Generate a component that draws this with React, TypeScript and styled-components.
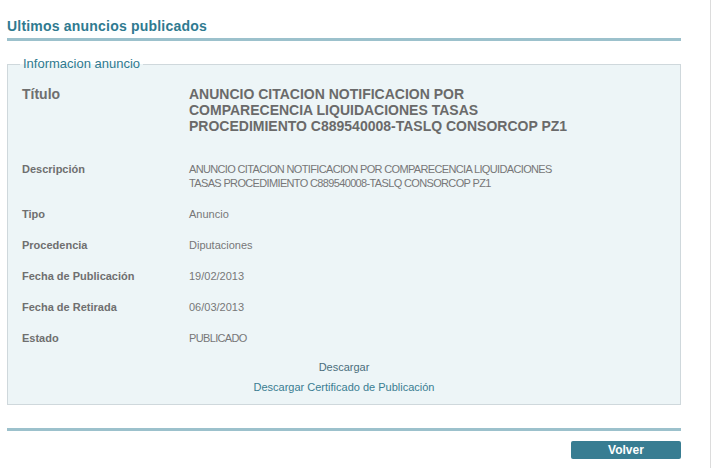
import React from "react";
import styled, { createGlobalStyle } from "styled-components";

const GlobalStyle = createGlobalStyle`
    html, body {
        margin: 0;
        padding: 0;
        background: #ffffff;
        font-family: "Liberation Sans", Arial, sans-serif;
    }
`;

const Page = styled.div`
    width: 711px;
    min-height: 468px;
    box-sizing: border-box;
    border-right: 1px solid #dcdcdc;
    padding: 18px 0 0 7px;
`;

const Content = styled.div`
    width: 674px;
`;

const Heading = styled.h2`
    margin: 0;
    font-size: 14px;
    line-height: 16px;
    font-weight: 700;
    letter-spacing: 0.2px;
    color: #2f7a90;
    padding-bottom: 4px;
    border-bottom: 3px solid #9cc1cc;
`;

const Fieldset = styled.fieldset`
    margin: 16px 0 0 0;
    padding: 15px 14px 10px 14px;
    border: 1px solid #cfd8dc;
    background: #edf5f7;
    min-width: 0;
`;

const Legend = styled.legend`
    margin-left: -2px;
    padding: 0 3px;
    font-size: 13px;
    line-height: 14px;
    color: #2f7a90;
`;

const InfoGrid = styled.div`
    display: grid;
    grid-template-columns: 167px 386px;
    row-gap: 17px;
`;

const Label = styled.div<{ $big?: boolean }>`
    font-size: ${p => (p.$big ? "14px" : "11px")};
    line-height: ${p => (p.$big ? "16px" : "14px")};
    font-weight: 700;
    color: #6f6f6f;
    margin-bottom: ${p => (p.$big ? "11px" : "0")};
`;

const Value = styled.div<{ $big?: boolean; $caps?: boolean }>`
    font-size: ${p => (p.$big ? "14px" : "11px")};
    line-height: ${p => (p.$big ? "16px" : "14px")};
    font-weight: ${p => (p.$big ? 700 : 400)};
    letter-spacing: ${p => (p.$caps && !p.$big ? "-0.65px" : "normal")};
    color: ${p => (p.$big ? "#6a6a6a" : "#777777")};
    margin-bottom: ${p => (p.$big ? "11px" : "0")};
`;

const Links = styled.div`
    margin-top: 15px;
    display: flex;
    flex-direction: column;
    align-items: center;
    gap: 6px;
`;

const DownloadLink = styled.a<{ $muted?: boolean }>`
    font-size: 11px;
    line-height: 14px;
    color: ${p => (p.$muted ? "#4b6e7c" : "#3a7d92")};
    text-decoration: none;
    cursor: pointer;
`;

const Rule = styled.div`
    margin-top: 23px;
    height: 3px;
    background: #9cc1cc;
`;

const Footer = styled.div`
    display: flex;
    justify-content: flex-end;
    margin-top: 10px;
`;

const Button = styled.button`
    width: 110px;
    height: 18px;
    border: none;
    border-radius: 2px;
    background: #387d92;
    color: #ffffff;
    font-family: "Liberation Sans", Arial, sans-serif;
    font-size: 12px;
    font-weight: 700;
    padding: 0;
    cursor: pointer;
`;

const rows: [string, string, boolean][] = [
    ["Descripción", "ANUNCIO CITACION NOTIFICACION POR COMPARECENCIA LIQUIDACIONES TASAS PROCEDIMIENTO C889540008-TASLQ CONSORCOP PZ1", true],
    ["Tipo", "Anuncio", false],
    ["Procedencia", "Diputaciones", false],
    ["Fecha de Publicación", "19/02/2013", false],
    ["Fecha de Retirada", "06/03/2013", false],
    ["Estado", "PUBLICADO", true],
];

const App = () => {
    return (
        <>
            <GlobalStyle />
            <Page>
                <Content>
                    <Heading>Ultimos anuncios publicados</Heading>
                    <Fieldset>
                        <Legend>Informacion anuncio</Legend>
                        <InfoGrid>
                            <Label $big>Título</Label>
                            <Value $big>ANUNCIO CITACION NOTIFICACION POR COMPARECENCIA LIQUIDACIONES TASAS PROCEDIMIENTO C889540008-TASLQ CONSORCOP PZ1</Value>
                            {rows.map(([label, value, caps]) => (
                                <React.Fragment key={label}>
                                    <Label>{label}</Label>
                                    <Value $caps={caps}>{value}</Value>
                                </React.Fragment>
                            ))}
                        </InfoGrid>
                        <Links>
                            <DownloadLink $muted>Descargar</DownloadLink>
                            <DownloadLink>Descargar Certificado de Publicación</DownloadLink>
                        </Links>
                    </Fieldset>
                    <Rule />
                    <Footer>
                        <Button>Volver</Button>
                    </Footer>
                </Content>
            </Page>
        </>
    );
};

export default App;
